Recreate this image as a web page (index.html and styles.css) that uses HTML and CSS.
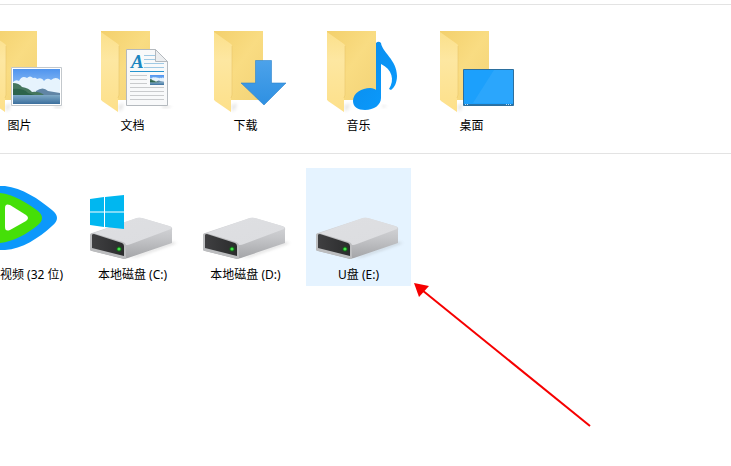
FILE: index.html
```html
<!DOCTYPE html>
<html lang="zh-CN">
  <head>
    <meta charset="UTF-8" />
    <meta name="viewport" content="width=device-width, initial-scale=1.0" />
    <title>此电脑</title>
    <link rel="stylesheet" href="styles.css">
  </head>
  <body>
    <!-- Shared gradients and shapes -->
    <svg class="defs" aria-hidden="true">
      <defs>
        <linearGradient id="back" x1="0" y1="0" x2="1" y2="1">
          <stop offset="0" stop-color="#f3d06c" />
          <stop offset="0.5" stop-color="#f9dc82" />
          <stop offset="1" stop-color="#f3d377" />
        </linearGradient>
        <linearGradient id="flap" x1="0" y1="0" x2="0" y2="1">
          <stop offset="0" stop-color="#fbe08b" />
          <stop offset="0.35" stop-color="#fde7a1" />
          <stop offset="1" stop-color="#fde08a" />
        </linearGradient>
        <linearGradient id="sky" x1="0" y1="0" x2="0" y2="1">
          <stop offset="0" stop-color="#4f94ee" />
          <stop offset="1" stop-color="#c8e4fb" />
        </linearGradient>
        <linearGradient id="lake" x1="0" y1="0" x2="0" y2="1">
          <stop offset="0" stop-color="#7fa9c6" />
          <stop offset="1" stop-color="#3b6f9d" />
        </linearGradient>
        <linearGradient id="arrow" x1="0" y1="0" x2="0" y2="1">
          <stop offset="0" stop-color="#4ca2ea" />
          <stop offset="1" stop-color="#2e90e2" />
        </linearGradient>
        <linearGradient id="note" x1="0" y1="0" x2="1" y2="1">
          <stop offset="0" stop-color="#0b8bea" />
          <stop offset="1" stop-color="#0a9cff" />
        </linearGradient>
        <linearGradient id="top" x1="0" y1="0" x2="1" y2="1">
          <stop offset="0" stop-color="#dedfe2" />
          <stop offset="1" stop-color="#dcdde0" />
        </linearGradient>
        <linearGradient id="side" x1="0" y1="0" x2="0" y2="1">
          <stop offset="0" stop-color="#dcdde0" />
          <stop offset="0.5" stop-color="#c4c5c8" />
          <stop offset="1" stop-color="#a3a4a7" />
        </linearGradient>
        <linearGradient id="face" x1="0" y1="0" x2="1" y2="0">
          <stop offset="0" stop-color="#3f3f41" />
          <stop offset="1" stop-color="#2b2c2d" />
        </linearGradient>
        <filter id="soft" x="-30%" y="-30%" width="160%" height="160%">
          <feGaussianBlur stdDeviation="1.5" />
        </filter>

        <symbol id="folder" viewBox="0 0 105 96">
          <path d="M38 86l6-2-1 6-4 3z" fill="#999" opacity="0.2" filter="url(#soft)" />
          <path d="M21 12h49v69H21z" fill="url(#back)" />
          <path d="M21 13l17 12q1 1 1 2v49l-1 3v14L22 82q-1-1-1-2z" fill="url(#flap)" />
          <path d="M39 27v49l-1 3" fill="none" stroke="#e9c76b" stroke-width="0.6" />
        </symbol>

        <symbol id="photo" viewBox="0 0 47 35" preserveAspectRatio="none">
          <path d="M0 0h47v35H0z" fill="url(#sky)" />
          <path d="M0 13q3-3 6-1 3-6 8-3 3-3 6 0 3-1 4 1 5-2 7 2 3-4 7-1 5-4 9 0v14H0z" fill="#e6f3fd" />
          <path d="M23 22q7-5 12 0l6 1 6 1v3H22z" fill="#6185a5" />
          <path d="M0 14q6 0 9 4 7 1 10 5 8-1 13 4H0z" fill="#45765e" />
          <path d="M0 20q10-1 15 4l10 3H0z" fill="#2d644b" />
          <path d="M0 26h47v9H0z" fill="url(#lake)" />
        </symbol>

        <symbol id="drive" viewBox="0 0 105 96">
          <path d="M48 90l44-16 5 1-40 14z" fill="#777" opacity="0.25" filter="url(#soft)" />
          <path d="M12 65l42-14q4-2 8-1l27 8q4 1 3 4v13l-44 15-4 1-32-8q-2 0-2-2V67z" fill="url(#side)" />
          <path d="M11 66l43-15q4-2 8-1l27 8q3 1 2 3L51 76q-5 2-7 0z" fill="url(#top)" />
          <path d="M10 67q0-2 3-2l30 9q3 1 3 4v12l-1 1-33-8q-2 0-2-2z" fill="#bcbdbf" />
          <path d="M12 67q0-1 2-1l28 9q2 1 2 3v10l-32-8z" fill="url(#face)" />
          <circle cx="39" cy="81" r="2.6" fill="#155f19" />
          <circle cx="39" cy="81" r="1.6" fill="#41e548" />
        </symbol>
      </defs>
    </svg>

    <main class="explorer">
      <!--
        Folders
      -->

      <section class="group" aria-label="文件夹">
        <a class="tile" href="#pictures">
          <svg class="icon" viewBox="0 0 105 96" aria-hidden="true">
            <use href="#folder" />
            <path d="M87 87h9l-3 2h-6z" fill="#888" opacity="0.25" filter="url(#soft)" />
            <path d="M44.500 48.500h50v38h-50z" fill="#fff" stroke="#c3c8cc" />
            <use href="#photo" x="46" y="50" width="47" height="35" />
          </svg>
          <span class="label">图片</span>
        </a>
        <a class="tile" href="#documents">
          <svg class="icon" viewBox="0 0 105 96" aria-hidden="true">
            <use href="#folder" />
            <path d="M82 87h10l-4 2h-6z" fill="#888" opacity="0.25" filter="url(#soft)" />
            <path d="M46.500 30.500h29l12 12v44h-41z" fill="#f8f9fa" stroke="#b4b9be" />
            <path d="M75.500 30.500v12h12z" fill="#eceef0" stroke="#b4b9be" />
            <text class="letter" x="51" y="49">A</text>
            <path d="M50 52.500h34" stroke="#2694cf" />
            <path d="M64 36.500h11M64 40.500h11M64 44.500h20M64 48.500h20" stroke="#9fc9e4" />
            <path d="M50 56.500h17M50 60.500h17M50 64.500h17M50 68.500h34M50 72.500h34M50 76.500h34M50 80.500h34" stroke="#c9cbcd" />
            <use href="#photo" x="70" y="56" width="14" height="10" />
          </svg>
          <span class="label">文档</span>
        </a>
        <a class="tile" href="#downloads">
          <svg class="icon" viewBox="0 0 105 96" aria-hidden="true">
            <use href="#folder" />
            <path d="M62.500 41.500h16V64H93L71 86 48 64h14.500z" fill="url(#arrow)" stroke="#2b83cc" stroke-width="0.6" />
          </svg>
          <span class="label">下载</span>
        </a>
        <a class="tile" href="#music">
          <svg class="icon" viewBox="0 0 105 96" aria-hidden="true">
            <use href="#folder" />
            <path d="M76 86l5 1-4 2z" fill="#888" opacity="0.2" filter="url(#soft)" />
            <path d="M70 24q2.500-2.500 5 0c1 9 16 17 16 33 0 7-3 12-6 14l-2-1c6-9 3-20-8-25v34c0 7-7 12-16 12-7 0-12-3-12-9 0-8 9-13 17-13 3 0 5 1 6 2z" fill="url(#note)" />
          </svg>
          <span class="label">音乐</span>
        </a>
        <a class="tile" href="#desktop">
          <svg class="icon" viewBox="0 0 105 96" aria-hidden="true">
            <use href="#folder" />
            <path d="M44.500 50.500h50v36h-50z" fill="#1ca0fc" stroke="#2b6f9f" />
            <path d="M75 51h19v33H54z" fill="#36aafb" opacity="0.6" />
            <path d="M45 85.500h49" stroke="#2a73a8" />
            <path d="M46 85.500h3M87 85.500h5" stroke="#b8dcf5" stroke-dasharray="1 1" />
          </svg>
          <span class="label">桌面</span>
        </a>
      </section>

      <!--
        Devices and drives
      -->

      <section class="group" aria-label="设备和驱动器">
        <a class="tile" href="#video">
          <svg class="icon" viewBox="0 0 105 96" aria-hidden="true">
            <path d="M22 26q4-9 16-8c17 2 34 13 47 24q10 8 0 16C72 70 55 81 38 82q-12 1-16-8-6-24 0-48z" fill="#0c98fb" />
            <path d="M20 31q3-7 12-6c14 1 28 10 39 18q8 7 0 14c-11 9-25 17-39 18q-9 1-12-6-4-19 0-38z" fill="#45df08" />
            <path d="M38 40q0-5 5-3l16 10q4 3 0 6L43 62q-5 2-5-3z" fill="#fff" />
          </svg>
          <span class="label">腾讯视频 (32 位)</span>
        </a>
        <a class="tile" href="#c">
          <svg class="icon" viewBox="0 0 105 96" aria-hidden="true">
            <use href="#drive" />
            <path d="M10 31l14-2v14.500H10zM25 29l19-2v16.500H25zM10 44.500h14V59l-14-2zM25 44.500h19V61l-19-2z" fill="#00b7f0" />
          </svg>
          <span class="label">本地磁盘 (C:)</span>
        </a>
        <a class="tile" href="#d">
          <svg class="icon" viewBox="0 0 105 96" aria-hidden="true">
            <use href="#drive" />
          </svg>
          <span class="label">本地磁盘 (D:)</span>
        </a>
        <a class="tile selected" href="#e" aria-current="true">
          <svg class="icon" viewBox="0 0 105 96" aria-hidden="true">
            <use href="#drive" />
          </svg>
          <span class="label">U盘 (E:)</span>
        </a>
      </section>

      <!-- Pointer laid over the drive list -->
      <svg class="pointer" viewBox="0 0 178 145" aria-hidden="true">
        <path d="M8 7l168 136" stroke="#f60000" stroke-width="2" />
        <path d="M0 0l15 3-10 11z" fill="#f60000" />
      </svg>
    </main>
  </body>
</html>
```

FILE: styles.css
```css
/*
  Global styles
*/

:root {
  --line: #e3e3e3;
  --selected: #e5f3ff;
}
* {
  margin: 0;
  padding: 0;
  box-sizing: border-box;
}
body {
  min-height: 100vh;
  overflow: hidden;
  color: black;
  background-color: white;
  font-family: "Noto Sans", "Noto Sans CJK SC", sans-serif;
  font-size: 12px;
}
.defs {
  position: absolute;
  width: 0;
  height: 0;
}

/*
  Explorer
*/

.explorer {
  position: relative;
  padding-top: 4px;
}
.group {
  display: grid;
  grid-template-columns: repeat(auto-fill, 105px);
  gap: 8px;
  /* the list is scrolled a little to the right */
  margin-left: -33px;
  padding: 14px 0 16px;
  border-top: 1px solid var(--line);
}

/*
  Tiles
*/

.tile {
  display: flex;
  flex-direction: column;
  align-items: center;
  color: inherit;
  text-decoration: none;
}
.tile:hover,
.tile.selected {
  background-color: var(--selected);
}
.icon {
  width: 100%;
  height: 96px;
}
.label {
  line-height: 22px;
  white-space: nowrap;
}
.letter {
  fill: #1d86c0;
  font-family: "Liberation Serif", serif;
  font-size: 19px;
  font-style: italic;
  font-weight: bold;
}

/*
  Pointer
*/

.pointer {
  position: absolute;
  top: 283px;
  left: 414px;
  width: 178px;
  height: 145px;
}
```
